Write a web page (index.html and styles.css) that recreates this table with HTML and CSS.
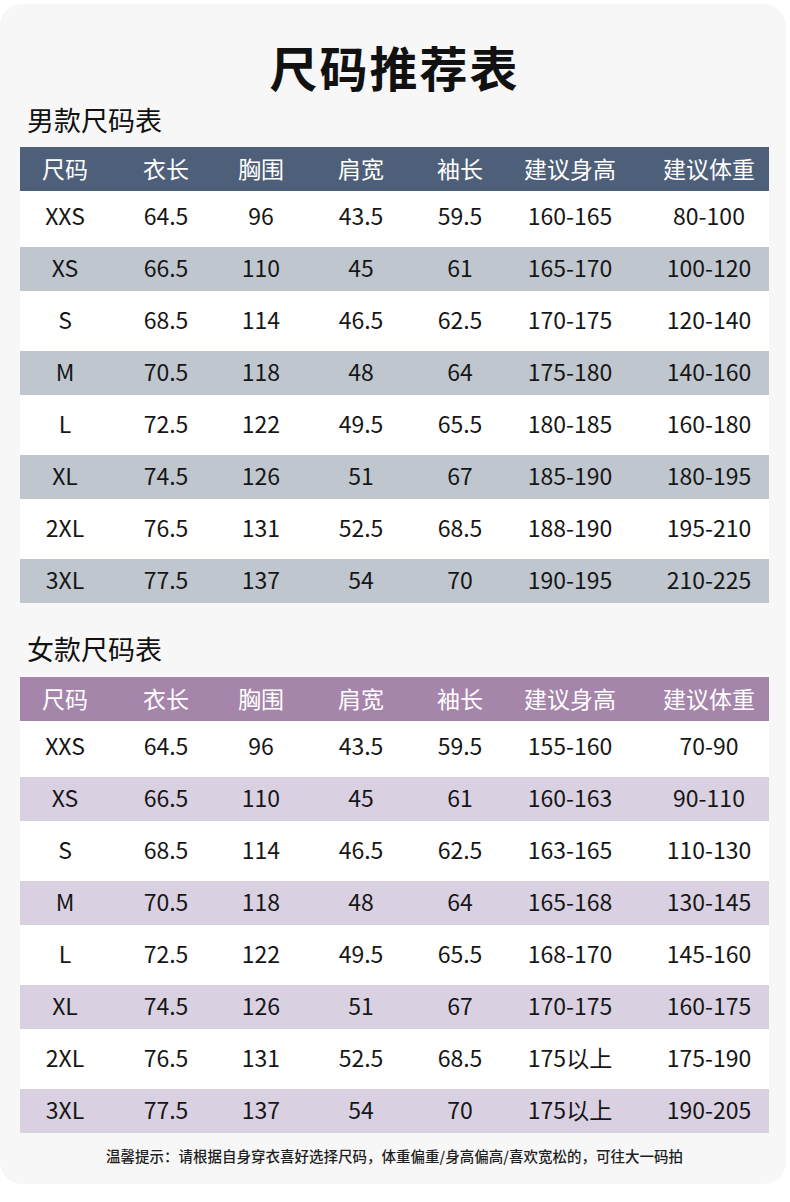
FILE: index.html
```html
<!DOCTYPE html>
<html lang="zh-CN">
<head>
<meta charset="utf-8">
<title>尺码推荐表</title>
<link rel="stylesheet" href="styles.css">
</head>
<body>
<div class="card">
  <h1 class="title">尺码推荐表</h1>

  <section class="section">
    <h2 class="subtitle">男款尺码表</h2>
    <div class="table men">
      <div class="row head"><span>尺码</span><span>衣长</span><span>胸围</span><span>肩宽</span><span>袖长</span><span>建议身高</span><span>建议体重</span></div>
      <div class="row"><span>XXS</span><span>64.5</span><span>96</span><span>43.5</span><span>59.5</span><span>160-165</span><span>80-100</span></div>
      <div class="row alt"><span>XS</span><span>66.5</span><span>110</span><span>45</span><span>61</span><span>165-170</span><span>100-120</span></div>
      <div class="row"><span>S</span><span>68.5</span><span>114</span><span>46.5</span><span>62.5</span><span>170-175</span><span>120-140</span></div>
      <div class="row alt"><span>M</span><span>70.5</span><span>118</span><span>48</span><span>64</span><span>175-180</span><span>140-160</span></div>
      <div class="row"><span>L</span><span>72.5</span><span>122</span><span>49.5</span><span>65.5</span><span>180-185</span><span>160-180</span></div>
      <div class="row alt"><span>XL</span><span>74.5</span><span>126</span><span>51</span><span>67</span><span>185-190</span><span>180-195</span></div>
      <div class="row"><span>2XL</span><span>76.5</span><span>131</span><span>52.5</span><span>68.5</span><span>188-190</span><span>195-210</span></div>
      <div class="row alt last"><span>3XL</span><span>77.5</span><span>137</span><span>54</span><span>70</span><span>190-195</span><span>210-225</span></div>
    </div>
  </section>

  <section class="section women-section">
    <h2 class="subtitle">女款尺码表</h2>
    <div class="table women">
      <div class="row head"><span>尺码</span><span>衣长</span><span>胸围</span><span>肩宽</span><span>袖长</span><span>建议身高</span><span>建议体重</span></div>
      <div class="row"><span>XXS</span><span>64.5</span><span>96</span><span>43.5</span><span>59.5</span><span>155-160</span><span>70-90</span></div>
      <div class="row alt"><span>XS</span><span>66.5</span><span>110</span><span>45</span><span>61</span><span>160-163</span><span>90-110</span></div>
      <div class="row"><span>S</span><span>68.5</span><span>114</span><span>46.5</span><span>62.5</span><span>163-165</span><span>110-130</span></div>
      <div class="row alt"><span>M</span><span>70.5</span><span>118</span><span>48</span><span>64</span><span>165-168</span><span>130-145</span></div>
      <div class="row"><span>L</span><span>72.5</span><span>122</span><span>49.5</span><span>65.5</span><span>168-170</span><span>145-160</span></div>
      <div class="row alt"><span>XL</span><span>74.5</span><span>126</span><span>51</span><span>67</span><span>170-175</span><span>160-175</span></div>
      <div class="row"><span>2XL</span><span>76.5</span><span>131</span><span>52.5</span><span>68.5</span><span>175以上</span><span>175-190</span></div>
      <div class="row alt last"><span>3XL</span><span>77.5</span><span>137</span><span>54</span><span>70</span><span>175以上</span><span>190-205</span></div>
    </div>
  </section>

  <p class="note">温馨提示：请根据自身穿衣喜好选择尺码，体重偏重/身高偏高/喜欢宽松的，可往大一码拍</p>
</div>
</body>
</html>
```

FILE: styles.css
```css
html, body {
  margin: 0;
  padding: 0;
  background: #ffffff;
}

body {
  font-family: "Noto Sans CJK SC", "Noto Sans", sans-serif;
  color: #141414;
}

.card {
  box-sizing: border-box;
  width: 786px;
  margin-top: 4px;
  padding: 34px 17px 17px 20px;
  background: #f7f7f7;
  border-radius: 22px;
}

.title {
  margin: 0;
  font-size: 48px;
  line-height: 56px;
  font-weight: 700;
  letter-spacing: 2px;
  text-align: center;
  color: #111111;
}

.subtitle {
  margin: 9px 0 10px 7px;
  font-size: 27px;
  line-height: 34px;
  font-weight: 400;
  color: #111111;
}

.women-section .subtitle {
  margin-top: 29px;
  margin-bottom: 11px;
}

.table {
  width: 749px;
  background: #ffffff;
}

.row {
  box-sizing: border-box;
  display: grid;
  grid-template-columns: 90px 112px 78px 122px 76px 144px 127px;
  align-items: center;
  height: 52px;
  padding-bottom: 5px;
  font-size: 23px;
  color: #161616;
}

.row span {
  text-align: center;
  white-space: nowrap;
}

.row span:last-child {
  padding-left: 7px;
}

.row.head {
  height: 44px;
  padding-bottom: 2px;
  color: #ffffff;
}

.row.alt {
  height: 44px;
  margin: 4px 0;
}

.row.alt.last {
  margin-bottom: 0;
}

.men .head {
  background: #4e6079;
}

.men .alt {
  background: #bfc6ce;
}

.women .head {
  background: #a685aa;
}

.women .alt {
  background: #d9d1e1;
}

.note {
  margin: 12px 0 0 0;
  font-size: 14.5px;
  line-height: 22px;
  font-weight: 500;
  text-align: center;
  color: #1e1e1e;
}
```
